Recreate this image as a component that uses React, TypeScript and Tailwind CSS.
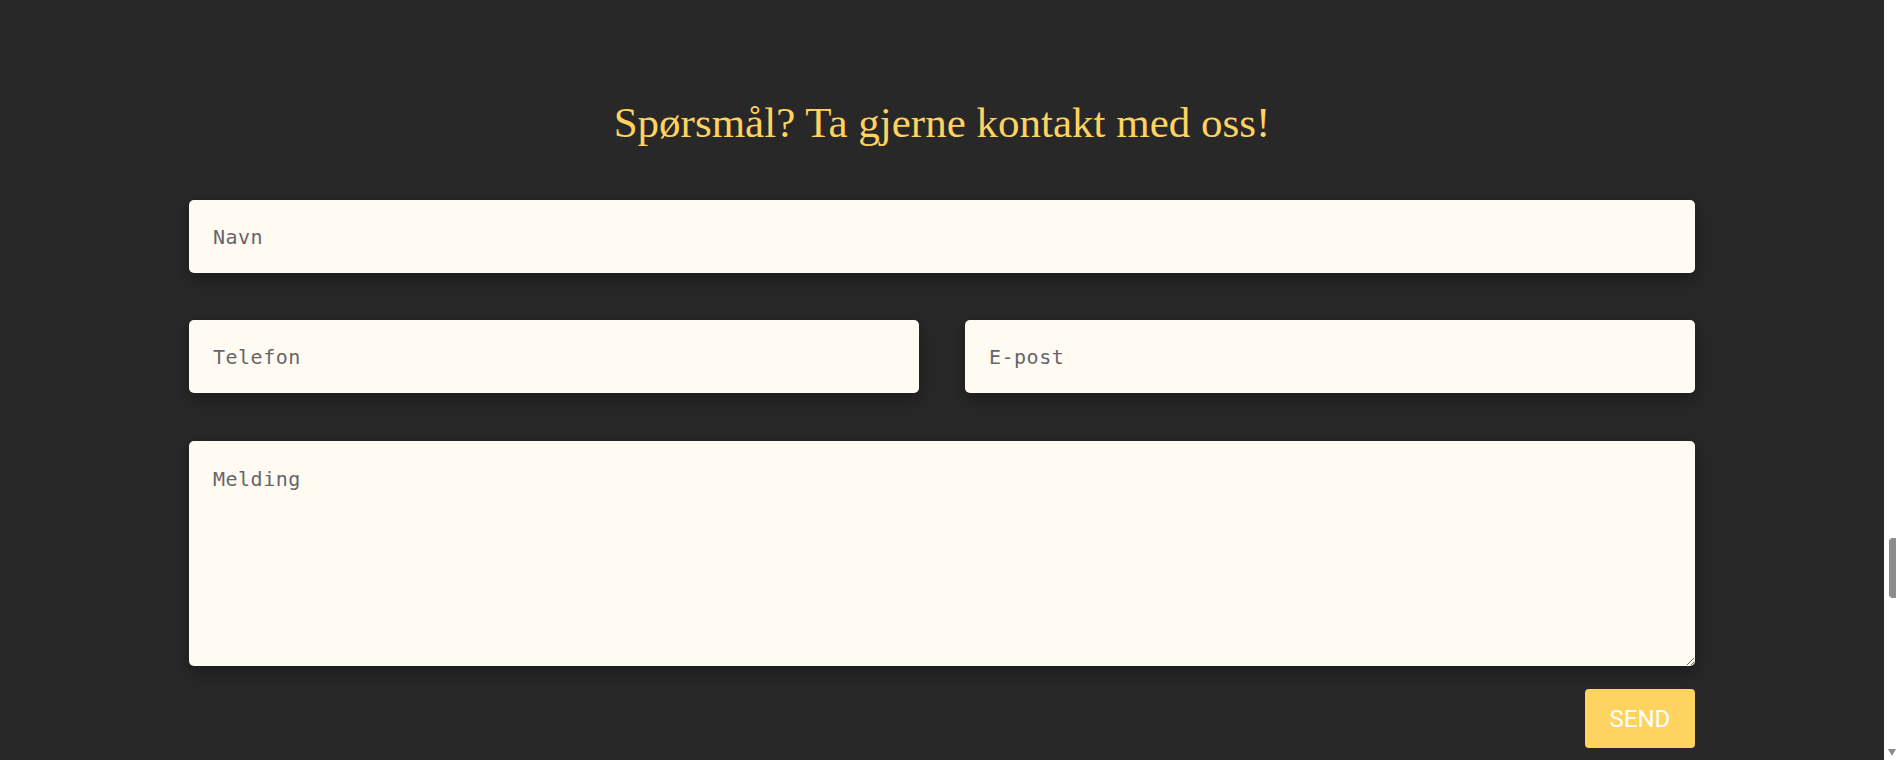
import React from "react";

const fieldClass =
    "w-full rounded-[5px] bg-[#fffbf3] px-6 font-['DejaVu_Sans_Mono',monospace] text-[20px] tracking-[0.5px] text-[#5f5f63] placeholder:text-[#66666a] shadow-[0_6px_18px_rgba(0,0,0,0.35)] outline-none";

export default function App() {
    return (
        <div className="flex h-[760px] w-full overflow-hidden bg-[#282828]">
            <main className="flex flex-1 flex-col items-center pt-[97px]">
                <h2 className="font-['Liberation_Serif',serif] text-[43px] leading-[52px] font-normal text-[#ffd35f]">
                    Spørsmål? Ta gjerne kontakt med oss!
                </h2>

                <form className="mt-[51px] flex w-[1506px] flex-col" onSubmit={(e) => e.preventDefault()}>
                    <input type="text" placeholder="Navn" className={`${fieldClass} h-[73px]`} />

                    <div className="mt-[47px] grid grid-cols-2 gap-[46px]">
                        <input type="tel" placeholder="Telefon" className={`${fieldClass} h-[73px]`} />
                        <input type="email" placeholder="E-post" className={`${fieldClass} h-[73px]`} />
                    </div>

                    <textarea
                        placeholder="Melding"
                        className={`${fieldClass} mt-[48px] h-[225px] pt-[23px] leading-[1.5]`}
                    />

                    <button
                        type="submit"
                        className="mt-[23px] flex h-[59px] w-[110px] items-center justify-center self-end rounded-[4px] bg-[#ffd35f] font-['Roboto',sans-serif] text-[24px] text-white"
                    >
                        SEND
                    </button>
                </form>
            </main>

            {/* scrollbar strip */}
            <div className="relative w-[12px] bg-white">
                <div className="absolute top-[538px] left-[5px] h-[60px] w-[7px] rounded-l-[4px] bg-[#8c8c8c]" />
                <div className="absolute bottom-[4px] left-[4px] h-0 w-0 border-x-[4px] border-t-[7px] border-x-transparent border-t-[#8c8c8c]" />
            </div>
        </div>
    );
}
